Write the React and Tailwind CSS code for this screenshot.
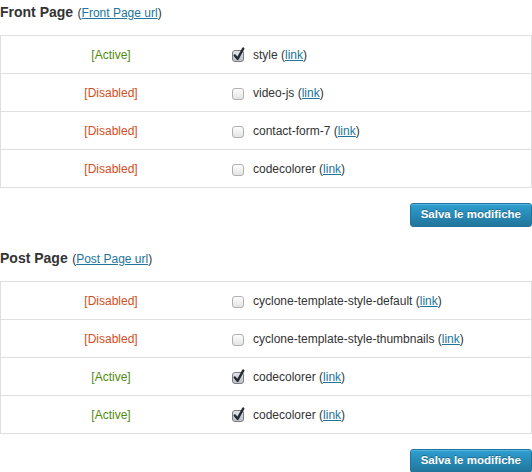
const sections = [
  {
    title: 'Front Page',
    url: 'Front Page url',
    rows: [
      { active: true, name: 'style' },
      { active: false, name: 'video-js' },
      { active: false, name: 'contact-form-7' },
      { active: false, name: 'codecolorer' },
    ],
  },
  {
    title: 'Post Page',
    url: 'Post Page url',
    rows: [
      { active: false, name: 'cyclone-template-style-default' },
      { active: false, name: 'cyclone-template-style-thumbnails' },
      { active: true, name: 'codecolorer' },
      { active: true, name: 'codecolorer' },
    ],
  },
]

const Checkbox = ({ checked }) => (
  <svg width="16" height="16" viewBox="0 0 16 16" className="shrink-0">
    <defs>
      <linearGradient id="cb-off" x1="0" y1="0" x2="0" y2="1">
        <stop offset="0" stopColor="#ffffff" />
        <stop offset="1" stopColor="#e2e2e2" />
      </linearGradient>
      <linearGradient id="cb-on" x1="0" y1="0" x2="0" y2="1">
        <stop offset="0" stopColor="#e4e7ec" />
        <stop offset="1" stopColor="#b9bec7" />
      </linearGradient>
    </defs>
    <rect
      x="1.5"
      y="3.5"
      width="11"
      height="11"
      rx="2.5"
      fill={checked ? 'url(#cb-on)' : 'url(#cb-off)'}
      stroke={checked ? '#7d7d7d' : '#b0b0b0'}
    />
    {checked && (
      <path d="M3.8 8.4 L6.6 11.8 L12.2 1.6" fill="none" stroke="#262a33" strokeWidth="2.4" strokeLinecap="round" strokeLinejoin="round" />
    )}
  </svg>
)

const Section = ({ title, url, rows }) => (
  <div className="flex flex-col">
    <div className="h-[35px] pt-[2px] leading-[20px]">
      <span className="text-[14px] font-bold text-[#333]">{title}</span>{' '}
      <span className="text-[12px] text-[#333]">
        (<a href="#" className="text-[#21759b] underline">{url}</a>)
      </span>
    </div>
    <div className="border-x border-t border-[#dfdfdf]">
      {rows.map((r, i) => (
        <div key={i} className="flex items-center h-[38px] text-[12px] border-b border-[#dfdfdf]">
          <div className={`w-[220px] text-center ${r.active ? 'text-[#4f8a10]' : 'text-[#d54e21]'}`}>
            {r.active ? '[Active]' : '[Disabled]'}
          </div>
          <div className="flex items-center pl-[10px] gap-[6px] text-[#333]">
            <Checkbox checked={r.active} />
            <span>
              {r.name} (<a href="#" className="text-[#21759b] underline">link</a>)
            </span>
          </div>
        </div>
      ))}
    </div>
    <div className="flex justify-end mt-[15px]">
      <button className="h-[24px] px-[10px] rounded-[3px] border border-[#21759b] bg-gradient-to-b from-[#2e9fd2] to-[#21759b] text-white text-[11.5px] font-bold shadow-[inset_0_1px_0_rgba(120,200,235,0.5)] [text-shadow:0_-1px_0_rgba(0,0,0,0.3)]">
        Salva le modifiche
      </button>
    </div>
  </div>
)

export default function App() {
  return (
    <div className="w-[532px] h-[472px] overflow-hidden bg-white font-['Liberation_Sans',Arial,sans-serif] flex flex-col gap-[19px]">
      {sections.map((s, i) => (
        <Section key={i} {...s} />
      ))}
    </div>
  )
}
